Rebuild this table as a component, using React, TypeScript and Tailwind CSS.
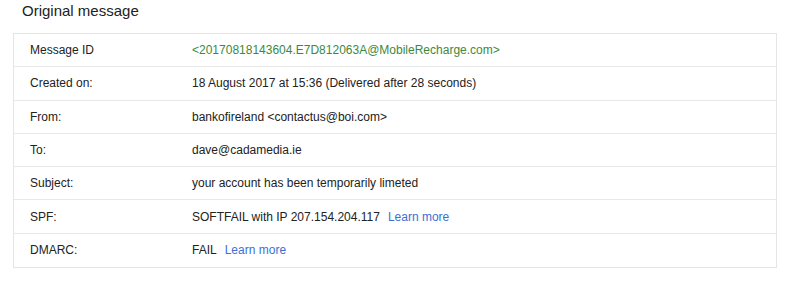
import type { ReactNode } from "react";

type Row = { label: string; value: ReactNode };

function LearnMore() {
  return <span className="ml-[8px] text-[#3b6fd6]">Learn more</span>;
}

const rows: Row[] = [
  {
    label: "Message ID",
    value: (
      <span className="text-[#3b8a3e]">
        &lt;20170818143604.E7D812063A@MobileRecharge.com&gt;
      </span>
    ),
  },
  {
    label: "Created on:",
    value: "18 August 2017 at 15:36 (Delivered after 28 seconds)",
  },
  { label: "From:", value: "bankofireland <contactus@boi.com>" },
  { label: "To:", value: "dave@cadamedia.ie" },
  { label: "Subject:", value: "your account has been temporarily limeted" },
  {
    label: "SPF:",
    value: (
      <>
        SOFTFAIL with IP 207.154.204.117
        <LearnMore />
      </>
    ),
  },
  {
    label: "DMARC:",
    value: (
      <>
        FAIL
        <LearnMore />
      </>
    ),
  },
];

export default function App() {
  return (
    <div className="h-[284px] w-[800px] bg-white font-['Liberation_Sans',Arial,sans-serif] text-[#222]">
      <h1 className="pl-[22px] text-[15px] leading-[21px]">Original message</h1>

      <div className="ml-[13px] mt-[12px] w-[764px] border border-[#e5e5e5]">
        {rows.map((row, i) => (
          <div
            key={row.label}
            className={
              "flex h-[33.3px] items-center text-[12px] " +
              (i < rows.length - 1 ? "border-b border-[#e8e8e8]" : "")
            }
          >
            <div className="w-[178px] shrink-0 pl-[16px]">{row.label}</div>
            <div>{row.value}</div>
          </div>
        ))}
      </div>
    </div>
  );
}
